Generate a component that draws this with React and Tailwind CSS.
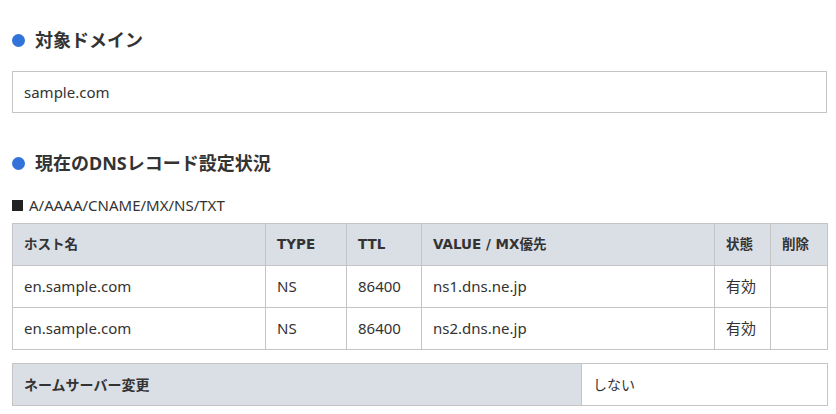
const rows = [
  { host: 'en.sample.com', type: 'NS', ttl: '86400', value: 'ns1.dns.ne.jp', state: '有効' },
  { host: 'en.sample.com', type: 'NS', ttl: '86400', value: 'ns2.dns.ne.jp', state: '有効' },
];

const cell = 'border border-[#c4c4c4] px-[11px]';
const head = 'border border-[#c4c4c4] px-[11px] font-[family-name:DejaVu_Sans,Noto_Sans_CJK_JP,sans-serif] text-[13.5px] font-bold';

function Heading({ children }) {
  return (
    <h2 className="flex items-center gap-[10px] text-[18px] font-bold text-[#333] leading-none">
      <span className="w-[13px] h-[13px] rounded-full bg-[#3173d9] shrink-0" />
      {children}
    </h2>
  );
}

export default function App() {
  return (
    <div className="w-[836px] h-[414px] bg-white px-[12px] pt-[31px] text-[#333] text-[15px] overflow-hidden font-[family-name:Noto_Sans,Noto_Sans_CJK_JP,sans-serif]">
      <Heading>対象ドメイン</Heading>
      <div className="mt-[22px] w-[815px] h-[42px] border border-[#c4c4c4] flex items-center px-[11px]">
        sample.com
      </div>

      <div className="mt-[41px]">
        <Heading>現在のDNSレコード設定状況</Heading>
      </div>

      <div className="mt-[26px] flex items-center gap-[6px] text-[15px] leading-none">
        <span className="w-[11px] h-[11px] bg-[#222]" />
        A/AAAA/CNAME/MX/NS/TXT
      </div>

      <table className="mt-[10px] w-[815px] border-collapse text-left table-fixed">
        <colgroup>
          <col className="w-[253px]" />
          <col className="w-[81px]" />
          <col className="w-[75px]" />
          <col className="w-[293px]" />
          <col className="w-[56px]" />
          <col className="w-[57px]" />
        </colgroup>
        <thead>
          <tr className="bg-[#dadee5] h-[42px]">
            <th className={head}>ホスト名</th>
            <th className={head}>TYPE</th>
            <th className={head}>TTL</th>
            <th className={head}>VALUE / MX優先</th>
            <th className={head}>状態</th>
            <th className={head}>削除</th>
          </tr>
        </thead>
        <tbody>
          {rows.map((r, i) => (
            <tr key={i} className="h-[42px]">
              <td className={cell}>{r.host}</td>
              <td className={cell}>{r.type}</td>
              <td className={cell}>{r.ttl}</td>
              <td className={cell}>{r.value}</td>
              <td className={cell}>{r.state}</td>
              <td className={cell}></td>
            </tr>
          ))}
        </tbody>
      </table>

      <table className="mt-[13px] w-[815px] border-collapse text-left table-fixed">
        <colgroup>
          <col className="w-[569px]" />
          <col className="w-[246px]" />
        </colgroup>
        <tbody>
          <tr className="h-[42px]">
            <th className="border border-[#c4c4c4] bg-[#dadee5] px-[11px] text-[14px] font-bold">ネームサーバー変更</th>
            <td className="border border-[#c4c4c4] px-[11px] text-[14px]">しない</td>
          </tr>
        </tbody>
      </table>
    </div>
  );
}
